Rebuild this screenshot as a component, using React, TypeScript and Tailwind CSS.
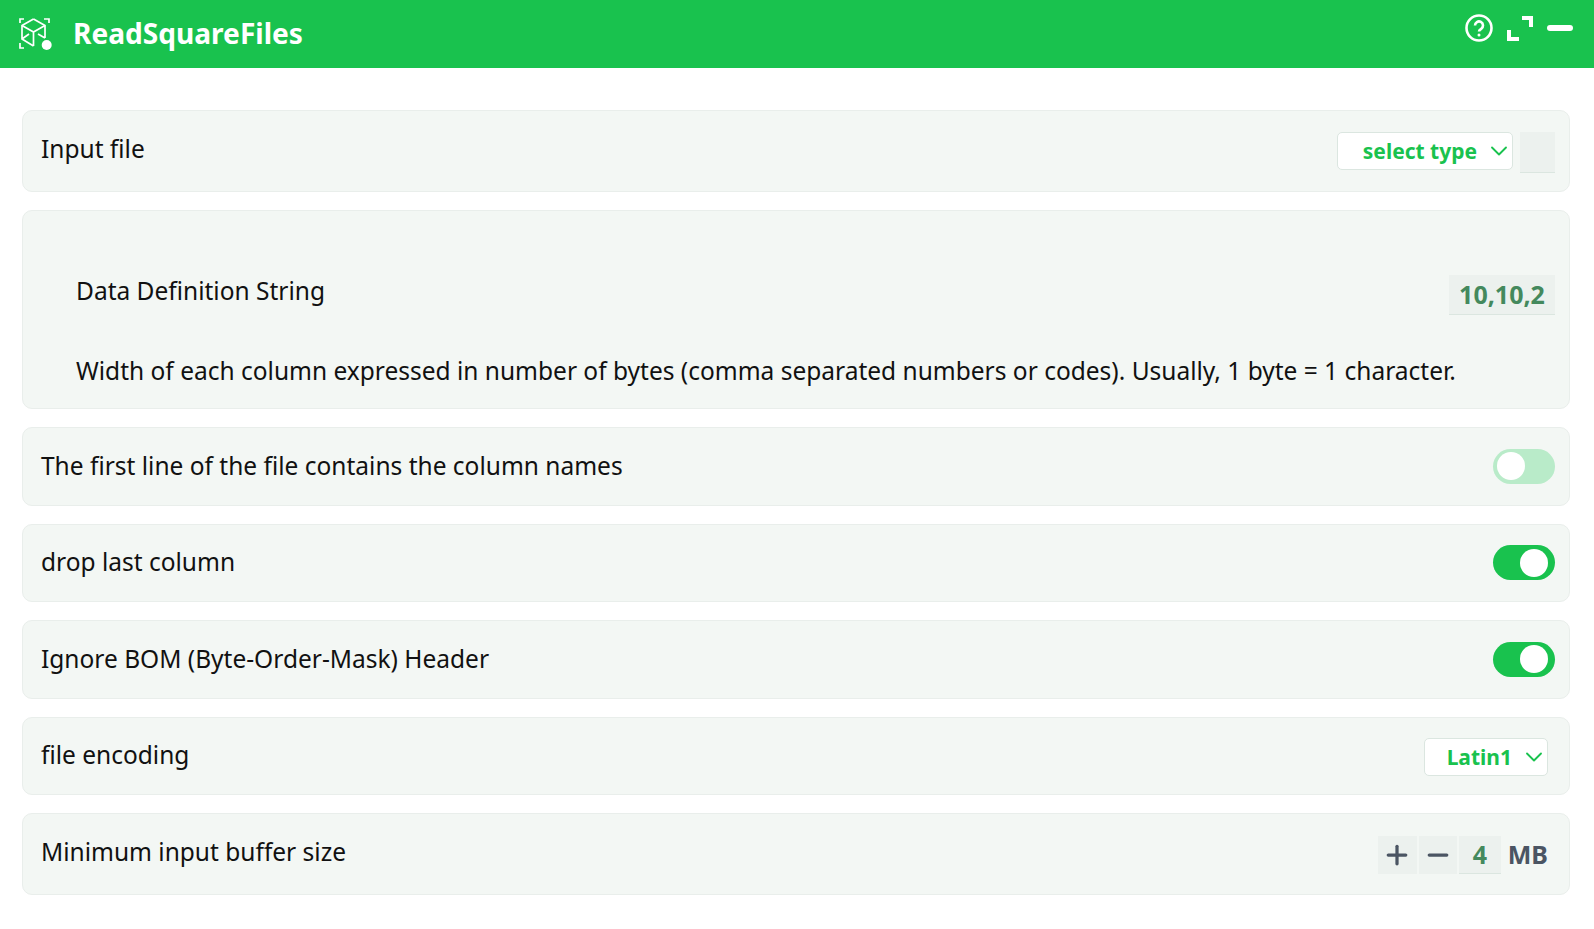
import { ChevronDown, Minus, Plus } from 'lucide-react';

function Toggle({ on }: { on: boolean }) {
  return (
    <div
      className={`flex h-[35px] w-[62px] items-center rounded-full ${on ? 'justify-end bg-[#19c24e] pr-[7px]' : 'justify-start bg-[#b9ebc9] pl-[4px]'}`}
    >
      <div className="h-[28px] w-[28px] rounded-full bg-white" />
    </div>
  );
}

function Select({ label, className }: { label: string; className: string }) {
  return (
    <div
      className={`flex h-[38px] items-center justify-end rounded-[5px] border border-[#dbe6e0] bg-white text-[21px] font-bold text-[#19c24e] ${className}`}
    >
      <span className="leading-none">{label}</span>
      <ChevronDown size={28} strokeWidth={1.6} className="mr-[-1px] ml-[8px]" />
    </div>
  );
}

function Row({ label, className, children }: { label: string; className: string; children: React.ReactNode }) {
  return (
    <div
      className={`flex items-center justify-between rounded-[10px] border border-[#e9eeeb] bg-[#f3f7f4] pr-[14px] pl-[18px] ${className}`}
    >
      <span className="text-[#111]">{label}</span>
      {children}
    </div>
  );
}

export default function App() {
  return (
    <div className="min-h-[929px] bg-white font-['Noto_Sans',sans-serif] text-[24.5px]">
      <header className="flex h-[68px] items-center justify-between bg-[#19c24e] pr-[21px] pl-[18px] text-white">
        <div className="flex items-center gap-[19px]">
          <svg width="36" height="36" viewBox="0 0 36 36" fill="none" stroke="white" strokeWidth="1.7">
            <path d="M2 7V3h4M26 3h5v4M2 27v5h4" />
            <path d="M15.5 3 27 9.5V22M15.5 3 4 9.5V23l11.5 7M4 9.5 15.5 16 27 9.5M15.5 16v14M4 23l7-5M27 22l-7-4" />
            <circle cx="28.7" cy="29" r="5" fill="white" stroke="none" />
          </svg>
          <span className="pb-[1px] text-[28.1px] leading-none font-bold">ReadSquareFiles</span>
        </div>
        <div className="flex items-center gap-[14px] pb-[12px]">
          <svg width="28" height="28" viewBox="0 0 28 28" fill="none" stroke="white" strokeWidth="2.6">
            <circle cx="14" cy="14" r="12.5" />
            <path d="M10 11.5a4 4 0 1 1 6.2 3.3c-1.4.9-2.2 1.4-2.2 2.7" />
            <circle cx="14" cy="21" r="1.5" fill="white" stroke="none" />
          </svg>
          <svg width="26" height="25" viewBox="0 0 26 25" fill="none" stroke="white" strokeWidth="4">
            <path d="M15 2h9v9M2 14v9h10" />
          </svg>
          <div className="h-[6px] w-[26px] rounded-full bg-white" />
        </div>
      </header>

      <main className="flex flex-col gap-[18px] pt-[42px] pr-[24px] pl-[22px]">
        <Row label="Input file" className="h-[82px] pb-[4px]">
          <div className="flex items-center gap-[7px] pt-[6px]">
            <Select label="select type" className="mb-[2px] w-[176px]" />
            <div className="h-[41px] w-[35px] border-b border-[#dbe6e0] bg-[#ecf1ee]" />
          </div>
        </Row>

        <div className="flex h-[199px] flex-col rounded-[10px] border border-[#e9eeeb] bg-[#f3f7f4] pt-[50px] pr-[14px] pl-[53px] text-[#111]">
          <div className="flex items-start justify-between">
            <span className="pt-[12px]">Data Definition String</span>
            <div className="mt-[14px] flex h-[40px] w-[106px] items-center justify-center border-b border-[#dbe6e0] bg-[#ecf1ee] text-[25px] font-bold text-[#44895d]">
              10,10,2
            </div>
          </div>
          <p className="mt-[38px]">
            Width of each column expressed in number of bytes (comma separated numbers or codes). Usually, 1 byte = 1 character.
          </p>
        </div>

        <Row label="The first line of the file contains the column names" className="h-[78.5px]">
          <Toggle on={false} />
        </Row>
        <Row label="drop last column" className="h-[78.5px]">
          <Toggle on />
        </Row>
        <Row label="Ignore BOM (Byte-Order-Mask) Header" className="h-[78.5px]">
          <Toggle on />
        </Row>
        <Row label="file encoding" className="h-[78.5px]">
          <Select label="Latin1" className="mt-[3px] mr-[7px] w-[124px]" />
        </Row>
        <Row label="Minimum input buffer size" className="h-[82px] pb-[4px]">
          <div className="mr-[7px] flex items-center gap-[2px] pt-[6px] text-[25px] font-bold text-[#4b5563]">
            <div className="flex h-[38px] w-[39px] items-center justify-center bg-[#ecf1ee]">
              <Plus size={30} strokeWidth={2.6} />
            </div>
            <div className="flex h-[38px] w-[38px] items-center justify-center bg-[#ecf1ee]">
              <Minus size={30} strokeWidth={2.6} />
            </div>
            <div className="flex h-[38px] w-[42px] items-center justify-center border-b border-[#dbe6e0] bg-[#ecf1ee] text-[#44895d]">4</div>
            <span className="ml-[5px]">MB</span>
          </div>
        </Row>
      </main>
    </div>
  );
}
